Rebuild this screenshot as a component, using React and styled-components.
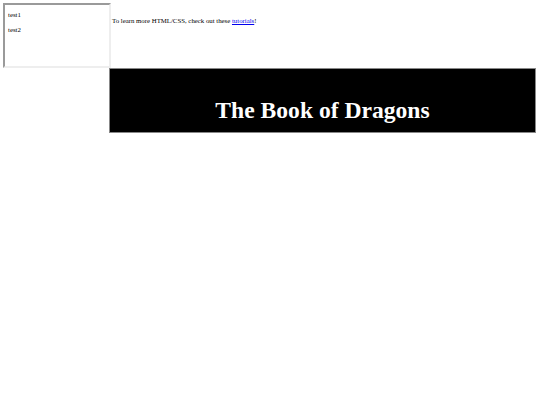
import React from 'react';
import styled, { createGlobalStyle } from 'styled-components';

const Global = createGlobalStyle`
	body {
		margin: 0;
		padding: 3px 4px 3px 3px;
		font-family: "Liberation Serif", "Times New Roman", serif;
		background: #fff;
		color: #000;
	}
`;

const TopRow = styled.div`
	display: flex;
	align-items: flex-start;
`;

const Frame = styled.div`
	box-sizing: border-box;
	width: 108px;
	height: 65px;
	border: 2px solid;
	border-color: #9a9a9a #eeeeee #eeeeee #9a9a9a;
	padding: 6px 3px;
	flex-shrink: 0;
`;

const FrameLine = styled.p`
	margin: 0 0 7px;
	font-size: 6.8px;
	line-height: 8px;
`;

const Note = styled.p`
	margin: 14px 0 0 1px;
	font-size: 6.8px;
	line-height: 8px;
	white-space: nowrap;

	a {
		color: #0000ee;
	}
`;

const Banner = styled.header`
	margin-left: 106px;
	height: 63px;
	background: #000;
	border: 1px solid #888;
	display: flex;
	justify-content: center;
	align-items: flex-end;
`;

const Title = styled.h1`
	margin: 0 0 9px;
	color: #fff;
	font-size: 23.6px;
	line-height: 26px;
	font-weight: bold;
`;

export default function App() {
	return (
		<>
			<Global />
			<TopRow>
				<Frame>
					<FrameLine>test1</FrameLine>
					<FrameLine>test2</FrameLine>
				</Frame>
				<Note>
					To learn more HTML/CSS, check out these <a href="#">tutorials</a>!
				</Note>
			</TopRow>
			<Banner>
				<Title>The Book of Dragons</Title>
			</Banner>
		</>
	);
}
